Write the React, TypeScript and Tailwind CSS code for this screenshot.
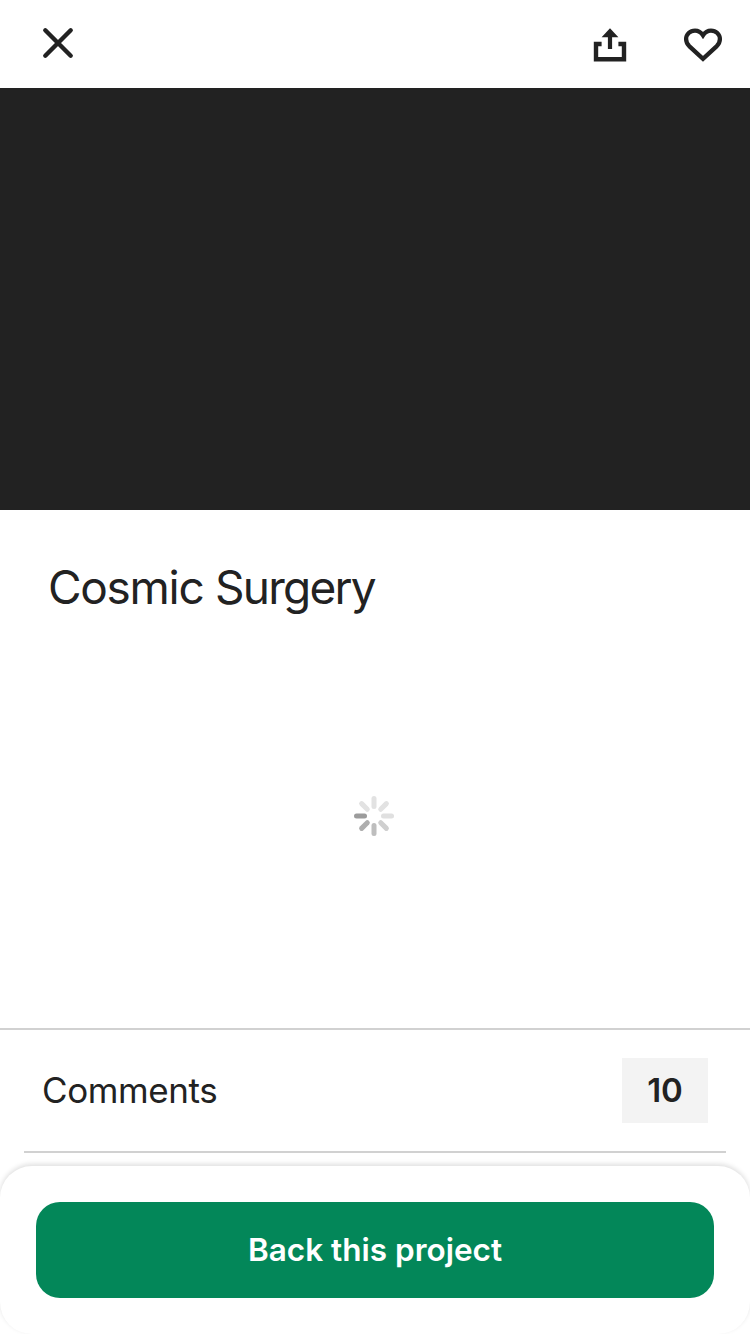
const spokes = [
  { angle: 0, color: "#e2e2e2" },
  { angle: 45, color: "#e2e2e2" },
  { angle: 90, color: "#e0e0e0" },
  { angle: 135, color: "#cfcfcf" },
  { angle: 180, color: "#bebebe" },
  { angle: 225, color: "#aeaeae" },
  { angle: 270, color: "#9c9c9c" },
  { angle: 315, color: "#e2e2e2" },
];

function CloseIcon() {
  return (
    <svg width="32" height="32" viewBox="0 0 32 32" fill="none" stroke="#222" strokeWidth="4.4" strokeLinecap="round">
      <path d="M3.3 3.3 28.7 28.7M28.7 3.3 3.3 28.7" />
    </svg>
  );
}

function ShareIcon() {
  return (
    <svg width="34" height="36" viewBox="0 0 34 36">
      <path d="M8.6 17H3V32.2H31V17H25.4" fill="none" stroke="#222" strokeWidth="4.4" />
      <path d="M17 1.2 25.4 10.2H19.1V22H14.9V10.2H8.6Z" fill="#222" />
    </svg>
  );
}

function HeartIcon() {
  return (
    <svg width="40" height="36" viewBox="0 0 40 36" fill="none" stroke="#222" strokeWidth="4.3">
      <path d="M20 8.3C18 5.2 15 3.6 12 3.6C7 3.6 3.1 7.3 3.1 12.1C3.1 14.8 4.2 17.1 6.2 19.1L20 31.8L33.8 19.1C35.8 17.1 36.9 14.8 36.9 12.1C36.9 7.3 33 3.6 28 3.6C25 3.6 22 5.2 20 8.3Z" />
    </svg>
  );
}

function Spinner() {
  return (
    <svg width="40" height="40" viewBox="0 0 40 40" strokeWidth="5" strokeLinecap="round">
      {spokes.map((s) => (
        <path key={s.angle} d="M20 2.5V10.5" stroke={s.color} transform={`rotate(${s.angle} 20 20)`} />
      ))}
    </svg>
  );
}

export default function App() {
  return (
    <div className="flex h-[1334px] w-[750px] flex-col overflow-hidden bg-white font-['Inter',sans-serif] text-[#222]">
      <header className="flex h-[88px] shrink-0 items-start justify-between pt-[27px] pr-[27px] pl-[42px]">
        <button aria-label="Close">
          <CloseIcon />
        </button>
        <div className="flex gap-[56px]">
          <button aria-label="Share">
            <ShareIcon />
          </button>
          <button aria-label="Save">
            <HeartIcon />
          </button>
        </div>
      </header>
      <div className="h-[422px] shrink-0 bg-[#222]" />
      <section className="flex h-[518px] shrink-0 flex-col px-12 pt-[47px]">
        <h1 className="text-[46px] leading-[60px] font-normal tracking-[-1.3px] whitespace-nowrap">
          Cosmic <span className="tracking-[-1.75px]">Surgery</span>
        </h1>
        <div className="mt-[179px] flex justify-center pr-[2px]">
          <Spinner />
        </div>
      </section>
      <section className="flex h-[125px] shrink-0 flex-col border-t-2 border-[#d1d1d1]">
        <div className="flex h-[121px] items-center justify-between pr-[42px] pl-[42px]">
          <span className="pb-[2px] text-[35px] leading-[44px] tracking-[-0.4px]">Comments</span>
          <span className="flex h-[65px] w-[86px] items-center justify-center bg-[#f3f3f3] text-[33px] font-semibold">10</span>
        </div>
        <div className="mx-6 h-[2px] bg-[#d1d1d1]" />
      </section>
      <footer className="mt-[13px] h-[168px] shrink-0 rounded-[32px] bg-white px-9 pt-[36px] shadow-[0_-2px_5px_rgba(0,0,0,0.13)]">
        <button className="h-24 w-full rounded-[24px] bg-[#038759] pb-px text-[31.5px] font-semibold text-white">
          Back this project
        </button>
      </footer>
    </div>
  );
}
